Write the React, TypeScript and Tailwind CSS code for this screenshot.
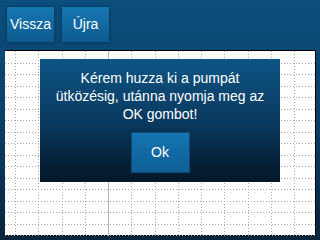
import React from "react";

function Grid() {
  const vs: number[] = [];
  for (let k = 0; k < 13; k++) vs.push(10 + 23.25 * k);
  const hs: number[] = [];
  for (let k = 1; k < 17; k++) hs.push(11.5 * k);
  return (
    <svg className="absolute inset-0" width="310" height="185" viewBox="0 0 310 185">
      {hs.map((y) => (
        <line key={"h" + y} x1="0" x2="310" y1={Math.round(y) + 0.5} y2={Math.round(y) + 0.5} stroke="#a8a8a8" strokeWidth="1" strokeDasharray="1 2" />
      ))}
      {vs.map((x, i) => (
        <line
          key={"v" + x}
          x1={Math.round(x) + 0.5}
          x2={Math.round(x) + 0.5}
          y1="0"
          y2="185"
          stroke={i === 4 ? "#b8b8b8" : "#a8a8a8"}
          strokeWidth="1"
          strokeDasharray={i === 4 ? undefined : "1 2"}
        />
      ))}
    </svg>
  );
}

export default function App() {
  return (
    <div
      className="w-[320px] h-[240px] overflow-hidden bg-gradient-to-b from-[#0c4f7d] via-[#0a3f66] to-[#07243d] flex flex-col"
      style={{ fontFamily: '"Liberation Sans", Arial, sans-serif' }}
    >
      <div className="flex gap-[8px] pl-[7px] pt-[7px] h-[50px]">
        <div className="w-[47px] h-[35px] flex items-center justify-center text-white text-[14px] bg-gradient-to-b from-[#1677b3] to-[#0d5b8f] shadow-[0_0_3px_rgba(0,20,40,0.6)]">
          Vissza
        </div>
        <div className="w-[47px] h-[35px] flex items-center justify-center text-white text-[14px] bg-gradient-to-b from-[#1677b3] to-[#0d5b8f] shadow-[0_0_3px_rgba(0,20,40,0.6)]">
          Újra
        </div>
      </div>
      <div className="relative ml-[5px] w-[311px] h-[186px] bg-white border-t border-r border-b border-black">
        <Grid />
        <div className="absolute left-[35px] top-[8px] w-[240px] h-[123px] flex flex-col items-center bg-gradient-to-b from-[#0d5585] via-[#0a3a60] to-[#041628] pt-[10px]">
          <div className="text-white text-[14px] leading-[18px] text-center">
            Kérem huzza ki a pumpát
            <br />
            ütközésig, utánna nyomja meg az
            <br />
            OK gombot!
          </div>
          <div className="mt-[9px] w-[59px] h-[41px] flex items-center justify-center text-white text-[14px] bg-gradient-to-b from-[#1675b2] to-[#0f5f95] border border-[#0a4a75]">
            Ok
          </div>
        </div>
      </div>
    </div>
  );
}
